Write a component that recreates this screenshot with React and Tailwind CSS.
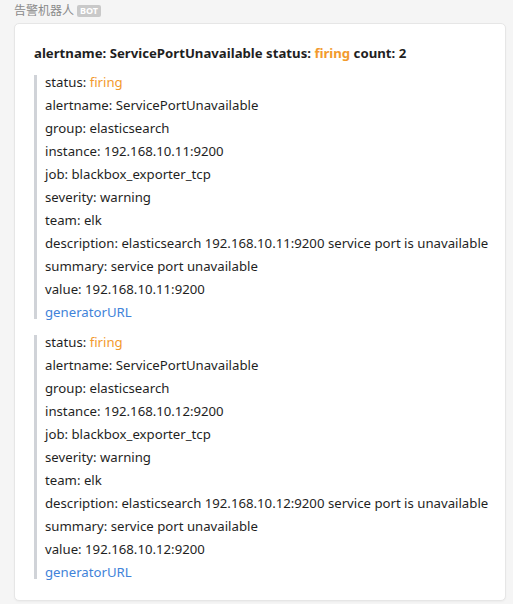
import React from 'react';

const alerts = [
    { instance: '192.168.10.11:9200' },
    { instance: '192.168.10.12:9200' }
];

const Line = ({ label, children }) => (
    <div className="leading-[14px] whitespace-nowrap">
        {label}: {children}
    </div>
);

const AlertBlock = ({ instance }) => (
    <div className="border-l-[3px] border-[#d0d3d8] pl-[8px] flex flex-col gap-[9px]">
        <Line label="status"><span className="text-[#f29a2e]">firing</span></Line>
        <Line label="alertname">ServicePortUnavailable</Line>
        <Line label="group">elasticsearch</Line>
        <Line label="instance">{instance}</Line>
        <Line label="job">blackbox_exporter_tcp</Line>
        <Line label="severity">warning</Line>
        <Line label="team">elk</Line>
        <Line label="description">elasticsearch {instance} service port is unavailable</Line>
        <Line label="summary">service port unavailable</Line>
        <Line label="value">{instance}</Line>
        <div className="leading-[14px] text-[#3f83d9]">generatorURL</div>
    </div>
);

const App = () => {
    return (
        <div className="min-h-screen bg-[#f5f5f5] pl-[14px] pr-[7px] pt-[3px] pb-[5px] font-['Noto_Sans','Noto_Sans_CJK_SC',sans-serif] text-[#1f1f1f]">
            {/* sender */}
            <div className="flex items-center gap-[3px] h-[16px] text-[12px] text-[#8a8a8a]">
                <span>告警机器人</span>
                <span className="bg-[#c9c9c9] text-white text-[9px] font-bold leading-[12px] px-[3px] rounded-[2px]">BOT</span>
            </div>

            {/* message card */}
            <div className="mt-[4px] bg-white border border-[#e6e6e6] rounded-[5px] shadow-[0_1px_2px_rgba(0,0,0,0.04)] pl-[19px] pr-[12px] pt-[21px] pb-[21px] text-[13.2px]">
                <div className="font-bold leading-[16px]">
                    alertname: ServicePortUnavailable status: <span className="text-[#f29a2e]">firing</span> count: 2
                </div>
                <div className="mt-[14px] flex flex-col gap-[16px]">
                    {alerts.map((a) => (
                        <AlertBlock key={a.instance} instance={a.instance} />
                    ))}
                </div>
            </div>
        </div>
    );
};

export default App;
